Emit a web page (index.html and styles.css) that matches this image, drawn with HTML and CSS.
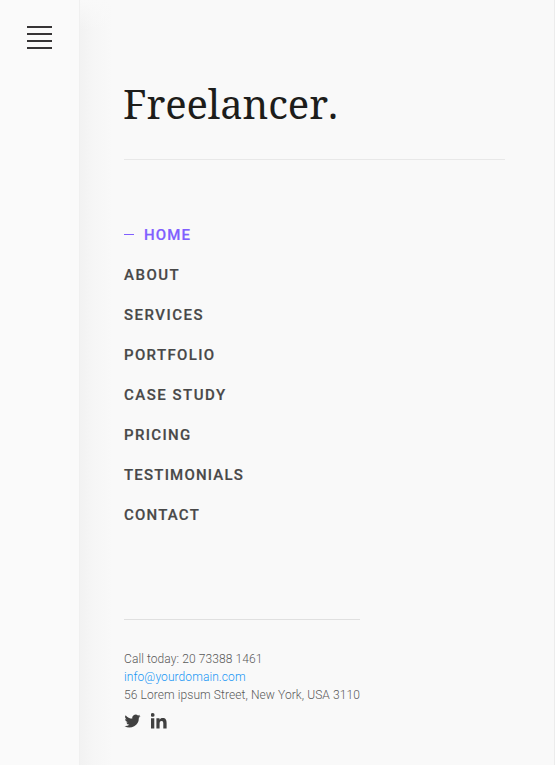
FILE: index.html
```html
<!DOCTYPE html>
<html lang="en">
<head>
<meta charset="utf-8">
<title>Freelancer.</title>
<link rel="stylesheet" href="styles.css">
</head>
<body>
<div class="layout">
  <aside class="rail">
    <button class="menu" aria-label="Menu"><span></span><span></span><span></span><span></span></button>
  </aside>
  <main class="panel">
    <header class="brand"><h1>Freelancer.</h1></header>
    <nav class="nav">
      <a class="active" href="#">HOME</a>
      <a class="wide" href="#">ABOUT</a>
      <a class="wide" href="#">SERVICES</a>
      <a href="#">PORTFOLIO</a>
      <a class="wide" href="#">CASE STUDY</a>
      <a href="#">PRICING</a>
      <a class="tight" href="#">TESTIMONIALS</a>
      <a class="tight" href="#">CONTACT</a>
    </nav>
    <footer class="contact">
      <p>Call today: 20 73388 1461</p>
      <p><a href="#">info@yourdomain.com</a></p>
      <p>56 Lorem ipsum Street, New York, USA 3110</p>
      <div class="social">
        <svg width="17" height="16" viewBox="0 0 24 24"><path d="M24 4.6a10 10 0 0 1-2.8.8 5 5 0 0 0 2.1-2.7 10 10 0 0 1-3.1 1.2 4.9 4.9 0 0 0-8.4 4.5A14 14 0 0 1 1.7 3.2a4.9 4.9 0 0 0 1.5 6.5A5 5 0 0 1 1 9.1a4.9 4.9 0 0 0 3.9 4.9 5 5 0 0 1-2.2.1 4.9 4.9 0 0 0 4.6 3.4A10 10 0 0 1 0 19.5 14 14 0 0 0 21.5 7.1 10 10 0 0 0 24 4.6z"/></svg>
        <svg width="16" height="16" viewBox="0 0 16 16"><path d="M0 5.3h3.3V15.5H0zM1.7 0a1.9 1.9 0 1 1 0 3.8 1.9 1.9 0 0 1 0-3.8zM5.4 5.3h3.1v1.5c.6-1 1.7-1.7 3.1-1.7 3.3 0 4 2.1 4 5v5.4h-3.3v-4.7c0-1.3 0-2.9-1.7-2.9s-2 1.4-2 2.8v4.8H5.4z"/></svg>
      </div>
    </footer>
  </main>
</div>
</body>
</html>
```
FILE: styles.css
```css
* { box-sizing: border-box; }
body { margin: 0; background: #f9f9f9; font-family: Roboto, sans-serif; }
.layout { display: flex; height: 765px; overflow: hidden; }
.rail { width: 80px; padding: 26px 27px; background: #fafafa; border-right: 1px solid #f0f0f0; }
.menu { display: flex; flex-direction: column; gap: 5px; width: 25px; padding: 0; border: 0; background: none; }
.menu span { height: 2px; width: 25px; background: #363435; }
.panel { flex: 1; padding: 80px 49px 0 44px; border-right: 1px solid #ececec; background: linear-gradient(180deg, #f9f9f9, rgba(249, 249, 249, 0) 30px), linear-gradient(90deg, #f2f2f2, #f6f6f6 14px, #f9f9f9 32px); }
.brand { height: 80px; border-bottom: 1px solid #e8e8e8; }
h1 { margin: 0 0 0 -1px; font: 400 40px/48px "Noto Serif", "Droid Serif", "DejaVu Serif", serif; font-kerning: none; letter-spacing: -0.1px; color: #1d1d1b; }
.nav { display: flex; flex-direction: column; padding-top: 55px; }
.nav a { display: flex; align-items: center; height: 40px; font-size: 15px; font-weight: 500; letter-spacing: 1.35px; -webkit-text-stroke: 0.2px currentColor; color: #484848; text-decoration: none; }
.nav .wide { letter-spacing: 1.5px; }
.nav .tight { letter-spacing: 1.2px; }
.nav .active { color: #805fff; letter-spacing: 1.1px; }
.active::before { content: ""; width: 10px; height: 1px; margin: 0 10px 1px 0; background: #805fff; }
.contact { width: 236px; margin-top: 84px; padding-top: 30px; border-top: 1px solid #e0e0e0; font-size: 12px; line-height: 18px; font-weight: 300; letter-spacing: 0.085px; color: #5a5a5a; white-space: nowrap; }
.contact p { margin: 0; }
.contact a { color: #1696f5; text-decoration: none; }
.social { display: flex; gap: 10px; margin-top: 8.5px; fill: #404040; }
```
